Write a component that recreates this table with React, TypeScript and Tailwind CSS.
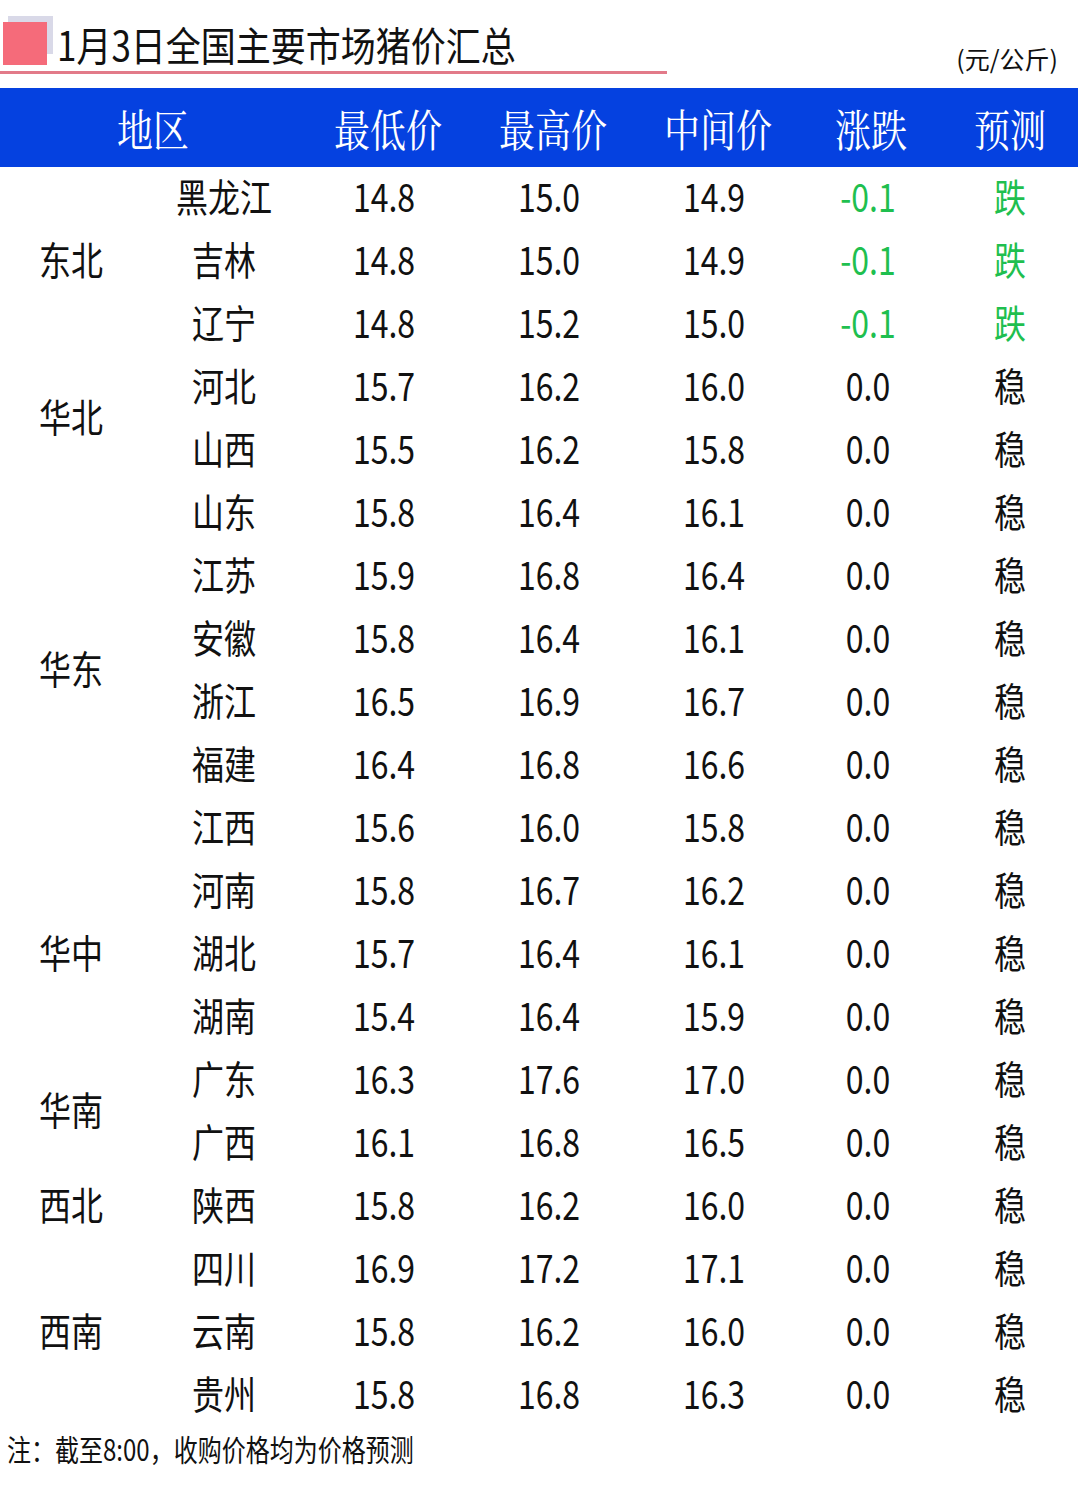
const CJK = "font-['Noto_Sans_CJK_SC','Noto_Sans',sans-serif]";

type Row = { p: string; lo: string; hi: string; mid: string; chg: string; fc: string };
type Group = { region: string; rows: Row[] };

const r = (p: string, lo: string, hi: string, mid: string, chg = "0.0", fc = "稳"): Row => ({
  p,
  lo,
  hi,
  mid,
  chg,
  fc,
});

const groups: Group[] = [
  {
    region: "东北",
    rows: [
      r("黑龙江", "14.8", "15.0", "14.9", "-0.1", "跌"),
      r("吉林", "14.8", "15.0", "14.9", "-0.1", "跌"),
      r("辽宁", "14.8", "15.2", "15.0", "-0.1", "跌"),
    ],
  },
  { region: "华北", rows: [r("河北", "15.7", "16.2", "16.0"), r("山西", "15.5", "16.2", "15.8")] },
  {
    region: "华东",
    rows: [
      r("山东", "15.8", "16.4", "16.1"),
      r("江苏", "15.9", "16.8", "16.4"),
      r("安徽", "15.8", "16.4", "16.1"),
      r("浙江", "16.5", "16.9", "16.7"),
      r("福建", "16.4", "16.8", "16.6"),
      r("江西", "15.6", "16.0", "15.8"),
    ],
  },
  {
    region: "华中",
    rows: [r("河南", "15.8", "16.7", "16.2"), r("湖北", "15.7", "16.4", "16.1"), r("湖南", "15.4", "16.4", "15.9")],
  },
  { region: "华南", rows: [r("广东", "16.3", "17.6", "17.0"), r("广西", "16.1", "16.8", "16.5")] },
  { region: "西北", rows: [r("陕西", "15.8", "16.2", "16.0")] },
  {
    region: "西南",
    rows: [r("四川", "16.9", "17.2", "17.1"), r("云南", "15.8", "16.2", "16.0"), r("贵州", "15.8", "16.8", "16.3")],
  },
];

function T({ children, className = "" }: { children: React.ReactNode; className?: string }) {
  return <span className={`inline-block scale-y-[1.22] ${className}`}>{children}</span>;
}

function DataRow({ row }: { row: Row }) {
  const down = row.chg.startsWith("-");
  const tone = down ? "text-[#1fbf4f]" : "text-[#111]";
  return (
    <div className="flex h-[63px] items-center pb-[8px] text-[32px] leading-none text-[#111]">
      <div className="w-[164px] text-center">
        <T>{row.p}</T>
      </div>
      <div className="w-[156px] text-center">
        <T>{row.lo}</T>
      </div>
      <div className="w-[174px] text-center">
        <T>{row.hi}</T>
      </div>
      <div className="w-[156px] text-center">
        <T>{row.mid}</T>
      </div>
      <div className={`w-[152px] text-center ${tone}`}>
        <T>{row.chg}</T>
      </div>
      <div className={`w-[132px] text-center ${tone}`}>
        <T>{row.fc}</T>
      </div>
    </div>
  );
}

export default function App() {
  return (
    <div className={`h-[1487px] w-[1080px] overflow-hidden bg-white ${CJK}`}>
      {/* title */}
      <div className="flex h-[88px] items-start justify-between">
        <div className="mt-[15px] flex h-[59px] w-[667px] items-center border-b-[3px] border-[#e27a89]">
          <div className="relative ml-[3px] h-[43px] w-[44px]">
            <div className="absolute -top-[6px] left-[5px] h-[38px] w-[45px] bg-[#d9d9e8]" />
            <div className="absolute inset-0 bg-[#f56b7a]" />
          </div>
          <span className="ml-[10px] inline-block scale-y-[1.15] text-[35px] leading-none text-[#111]">
            1月3日全国主要市场猪价汇总
          </span>
        </div>
        <div className="pr-[22px] pt-[46px] text-[25px] leading-none text-[#111]">(元/公斤)</div>
      </div>

      {/* header */}
      <div className="flex h-[79px] w-[1078px] items-center bg-[#0541e0] pt-[2px] font-['Noto_Serif_CJK_SC','Liberation_Serif','Noto_Sans_CJK_SC',serif] text-[36px] leading-none text-white">
        <div className="w-[306px] text-center">
          <T>地区</T>
        </div>
        <div className="w-[156px] pl-[8px] text-center">
          <T>最低价</T>
        </div>
        <div className="w-[174px] pl-[8px] text-center">
          <T>最高价</T>
        </div>
        <div className="w-[156px] pl-[8px] text-center">
          <T>中间价</T>
        </div>
        <div className="w-[152px] pl-[6px] text-center">
          <T>涨跌</T>
        </div>
        <div className="w-[132px] text-center">
          <T>预测</T>
        </div>
      </div>

      {/* body */}
      <div>
        {groups.map((g) => (
          <div key={g.region} className="flex">
            <div className="flex w-[142px] items-center justify-center pb-[8px] text-[32px] leading-none text-[#111]">
              <T>{g.region}</T>
            </div>
            <div>
              {g.rows.map((row) => (
                <DataRow key={row.p} row={row} />
              ))}
            </div>
          </div>
        ))}
      </div>

      {/* note */}
      <div className="pl-[7px] pt-[10px] text-[24px] leading-none text-[#111]">
        <T>注：截至8:00，收购价格均为价格预测</T>
      </div>
    </div>
  );
}
